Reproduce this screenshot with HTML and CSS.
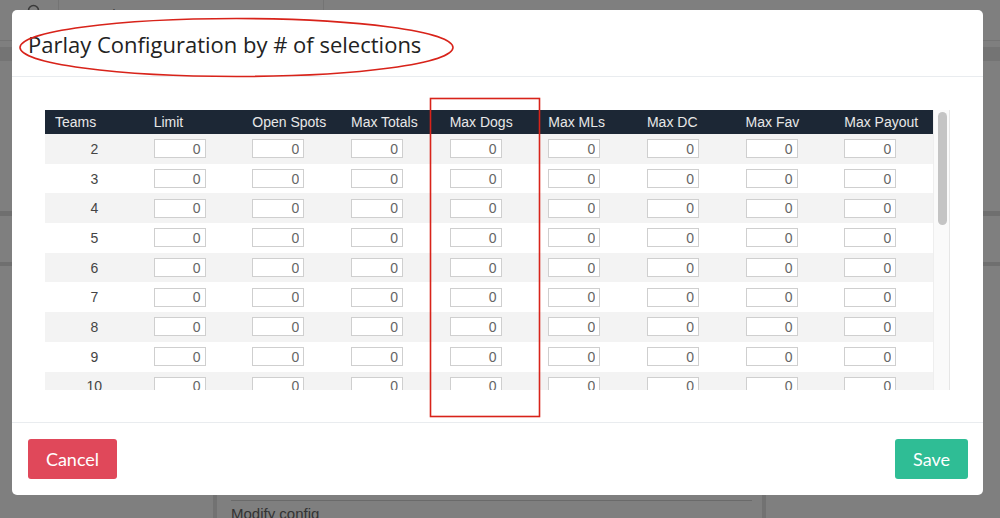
FILE: index.html
```html
<!DOCTYPE html>
<html lang="en">
<head>
<meta charset="utf-8">
<title>Parlay Configuration</title>
<link rel="stylesheet" href="styles.css">
</head>
<body>
<div class="page">
  <div class="topbar">
    <div class="search-icon">
      <svg width="16" height="16" viewBox="0 0 16 16"><circle cx="6.5" cy="6.5" r="5" fill="none" stroke="#3a3a3a" stroke-width="1.6"/><path d="M10.2 10.2 L14.5 14.5" stroke="#3a3a3a" stroke-width="1.6"/></svg>
    </div>
    <div class="search-text">Search accounts</div>
    <div class="topbar-rest"></div>
  </div>
  <div class="band band-a"></div>
  <div class="band band-b"></div>
  <div class="band band-c"></div>
  <div class="bottom-panel">
    <div class="bottom-line"></div>
    <div class="bottom-text">Modify config</div>
  </div>
</div>

<div class="overlay">
  <div class="modal">
    <div class="modal-header">
      <h5 class="modal-title">Parlay Configuration by # of selections</h5>
    </div>
    <div class="modal-body">
      <div class="scroll-box">
        <div class="table-wrap">
          <table class="grid">
            <thead>
              <tr>
                <th>Teams</th><th>Limit</th><th>Open Spots</th><th>Max Totals</th><th>Max Dogs</th><th>Max MLs</th><th>Max DC</th><th>Max Fav</th><th>Max Payout</th>
              </tr>
            </thead>
            <tbody id="rows"></tbody>
          </table>
        </div>
        <div class="scrollbar"><div class="thumb"></div></div>
      </div>
    </div>
    <div class="modal-footer">
      <button class="btn btn-cancel">Cancel</button>
      <button class="btn btn-save">Save</button>
    </div>
  </div>
</div>

<svg class="annotations" width="1000" height="518" viewBox="0 0 1000 518">
  <ellipse cx="236.5" cy="47.5" rx="216.5" ry="29" fill="none" stroke="#d8231a" stroke-width="1.6"/>
  <rect x="430.5" y="98.5" width="109" height="318" fill="none" stroke="#d8231a" stroke-width="1.6"/>
</svg>

<script src="app.js"></script>
</body>
</html>
```

FILE: app.js
```js
(function () {
  var tbody = document.getElementById('rows');
  var html = '';
  for (var t = 2; t <= 23; t++) {
    html += '<tr><td class="team">' + t + '</td>';
    for (var c = 0; c < 8; c++) {
      html += '<td><input class="cell" type="text" value="0"></td>';
    }
    html += '</tr>';
  }
  tbody.innerHTML = html;
})();
```

FILE: styles.css
```css
html, body {
  margin: 0;
  padding: 0;
}
body {
  width: 1000px;
  height: 518px;
  overflow: hidden;
  background: #7f7f7f;
  font-family: "Liberation Sans", Arial, sans-serif;
  position: relative;
}

/* background page (dimmed) */
.page {
  width: 1000px;
  height: 518px;
  position: relative;
}
.topbar {
  display: flex;
  height: 40px;
  border-bottom: 1px solid #747474;
}
.search-icon {
  width: 46px;
  margin-left: 12px;
  display: flex;
  justify-content: center;
  padding-top: 4px;
  border-right: 1px solid #747474;
}
.search-text {
  width: 250px;
  padding: 6px 0 0 14px;
  color: #3e3e3e;
  font-size: 15px;
  border-right: 1px solid #747474;
}
.topbar-rest {
  flex: 1;
}
.band {
  position: absolute;
  left: 0;
  right: 0;
  height: 5px;
  background: #6f6f6f;
}
.band-a { top: 47px; height: 14px; background: #747474; }
.band-b { top: 211px; }
.band-c { top: 262px; height: 4px; }
.bottom-panel {
  position: absolute;
  left: 213px;
  top: 490px;
  width: 545px;
  height: 40px;
  border-left: 4px solid #727272;
  border-right: 4px solid #727272;
}
.bottom-line {
  margin: 10px 10px 0 14px;
  border-top: 1px solid #6a6a6a;
}
.bottom-text {
  padding: 4px 0 0 14px;
  font-size: 15px;
  color: #333;
}

/* modal */
.overlay {
  position: absolute;
  inset: 0;
}
.modal {
  position: absolute;
  left: 12px;
  top: 10px;
  width: 971px;
  height: 485px;
  background: #fff;
  border-radius: 5px;
  display: flex;
  flex-direction: column;
  overflow: hidden;
}
.modal-header {
  height: 66px;
  padding: 0 16px;
  display: flex;
  align-items: center;
  border-bottom: 1px solid #e9ecef;
}
.modal-title {
  margin: 0;
  font-family: "Open Sans", "Lato", sans-serif;
  font-weight: 400;
  font-size: 22px;
  color: #222;
  padding-top: 1px;
}
.modal-body {
  height: 345px;
  padding: 33px 33px 32px 33px;
  box-sizing: border-box;
}
.scroll-box {
  width: 905px;
  height: 280px;
  display: flex;
}
.table-wrap {
  width: 888px;
  height: 280px;
  overflow: hidden;
}
.scrollbar {
  width: 17px;
  height: 280px;
  box-sizing: border-box;
  background: #fafafa;
  border-left: 1px solid #eeeeee;
  border-right: 1px solid #e6e6e6;
  padding: 2px 3px 0 4px;
}
.thumb {
  width: 9px;
  height: 113px;
  background: #c4c4c4;
  border-radius: 5px;
}

.grid {
  width: 888px;
  border-collapse: collapse;
  table-layout: fixed;
}
.grid th {
  height: 24px;
  padding: 0 0 0 10px;
  background: #1c2735;
  color: #e8e8e8;
  font-size: 14px;
  font-weight: 400;
  text-align: left;
  white-space: nowrap;
}
.grid td {
  height: 29.7px;
  padding: 0 0 0 10px;
  font-size: 14px;
  color: #444;
}
.grid td.team {
  text-align: center;
  padding: 0;
}
.grid tbody tr:nth-child(odd) td {
  background: #f3f3f3;
}
.cell {
  display: block;
  box-sizing: border-box;
  width: 52px;
  height: 19px;
  margin: 0;
  padding: 0 4px 0 0;
  border: 1px solid #cfcfcf;
  border-radius: 0;
  background: #fff;
  text-align: right;
  font-family: "Liberation Sans", Arial, sans-serif;
  font-size: 14px;
  color: #666;
}

.modal-footer {
  flex: 1;
  border-top: 1px solid #e9ecef;
  display: flex;
  justify-content: space-between;
  align-items: flex-start;
  padding: 16px 15px 0 16px;
}
.btn {
  height: 40px;
  border: none;
  border-radius: 3px;
  color: #fff;
  font-family: "Lato", "Open Sans", sans-serif;
  font-size: 18px;
  padding: 0;
  text-align: center;
  cursor: pointer;
}
.btn-cancel {
  width: 89px;
  background: #e0485a;
}
.btn-save {
  width: 73px;
  background: #2fbd95;
}

.annotations {
  position: absolute;
  left: 0;
  top: 0;
  pointer-events: none;
}
```
